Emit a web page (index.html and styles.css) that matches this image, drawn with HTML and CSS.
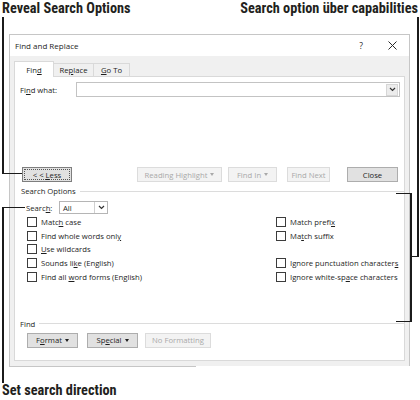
FILE: index.html
```html
<!DOCTYPE html>
<html lang="en">
<head>
<meta charset="utf-8">
<title>Find and Replace</title>
<link rel="stylesheet" href="styles.css">
</head>
<body>
<div class="captions">
  <span class="cap">Reveal Search Options</span>
  <span class="cap">Search option über capabilities</span>
</div>

<div class="dialog">
  <div class="titlebar">
    <span class="title">Find and Replace</span>
    <span class="help">?</span>
    <svg class="close-x" width="9" height="9" viewBox="0 0 9 9"><path d="M0.5 0.5L8.5 8.5M8.5 0.5L0.5 8.5" stroke="#2a2a2a" stroke-width="1" fill="none"/></svg>
  </div>
  <div class="tabstrip">
    <div class="tab active"><span>Fin<u>d</u></span></div>
    <div class="tab w-replace"><span>Re<u>p</u>lace</span></div>
    <div class="tab w-goto"><span><u>G</u>o To</span></div>
  </div>
  <div class="panel">
    <div class="find-row">
      <span class="find-label">Fi<u>n</u>d what:</span>
      <div class="combo">
        <span class="combo-btn"><svg width="7" height="5" viewBox="0 0 7 5"><path d="M1 1L3.5 3.5L6 1" stroke="#333" stroke-width="1.2" fill="none"/></svg></span>
      </div>
    </div>

    <div class="btn-row">
      <button class="btn default b-less"><span class="focus"><span>&lt; &lt; <u>L</u>ess</span></span></button>
      <button class="btn disabled b-rh"><span>Reading Highlight</span><i class="caret"></i></button>
      <button class="btn disabled b-findin"><span>Find In</span><i class="caret"></i></button>
      <button class="btn disabled b-next"><span>Find Next</span></button>
      <button class="btn b-close"><span>Close</span></button>
    </div>

    <div class="group"><span class="group-label">Search Options</span><span class="group-line"></span></div>

    <div class="search-row">
      <span class="search-label">Searc<u>h</u>:</span>
      <div class="select">
        <span class="select-val">All</span>
        <span class="select-btn"><svg width="7" height="5" viewBox="0 0 7 5"><path d="M1 1L3.5 3.5L6 1" stroke="#333" stroke-width="1.2" fill="none"/></svg></span>
      </div>
    </div>

    <div class="checks">
      <label class="check"><span class="cb"></span><span>Matc<u>h</u> case</span></label>
      <label class="check"><span class="cb"></span><span>Match prefi<u>x</u></span></label>
      <label class="check"><span class="cb"></span><span>Find whole words onl<u>y</u></span></label>
      <label class="check"><span class="cb"></span><span>Ma<u>t</u>ch suffix</span></label>
      <label class="check"><span class="cb"></span><span><u>U</u>se wildcards</span></label>
      <span></span>
      <label class="check"><span class="cb"></span><span>Sounds li<u>k</u>e (English)</span></label>
      <label class="check"><span class="cb"></span><span>Ignore punctuation character<u>s</u></span></label>
      <label class="check"><span class="cb"></span><span>Find all <u>w</u>ord forms (English)</span></label>
      <label class="check"><span class="cb"></span><span>Ignore white-sp<u>a</u>ce characters</span></label>
    </div>

    <div class="group find-group"><span class="group-label">Find</span><span class="group-line"></span></div>

    <div class="btn-row bottom-row">
      <button class="btn b-format"><span>F<u>o</u>rmat</span><i class="caret"></i></button>
      <button class="btn b-special"><span>Sp<u>e</u>cial</span><i class="caret"></i></button>
      <button class="btn disabled b-nofmt"><span>No Formatting</span></button>
    </div>
  </div>
</div>
<div class="dialog-base"></div>
<div class="caption-bottom">Set search direction</div>

<div class="line v l1v"></div>
<div class="line h l1h"></div>
<div class="line h l2h"></div>
<div class="line v l2v"></div>
<div class="line v rv"></div>
<div class="line h rconn"></div>
<div class="line v brv"></div>
<div class="line h brt"></div>
<div class="line h brb"></div>
</body>
</html>
```

FILE: styles.css
```css
* { box-sizing: border-box; }
html, body { margin: 0; padding: 0; }
body {
  width: 420px;
  height: 400px;
  position: relative;
  overflow: hidden;
  background: #fff;
  font-family: "Open Sans", "Noto Sans", sans-serif;
  font-size: 7.7px;
  color: #1e1e1e;
}
u { text-decoration: underline; text-underline-offset: 1px; }

/* captions */
.captions {
  display: flex;
  justify-content: space-between;
  height: 17px;
  padding: 0 2px;
}
.cap, .caption-bottom {
  font-family: "Roboto Condensed", "Roboto", sans-serif;
  font-stretch: condensed;
  font-weight: 700;
  font-size: 14.3px;
  line-height: 17px;
  color: #231f20;
  white-space: nowrap;
}
.caption-bottom { margin: 15px 0 0 2px; }

/* dialog */
.dialog {
  margin: 17px 0 0 9px;
  width: 401px;
  border: 1px solid #c6c6c6;
  border-bottom: none;
  background: #f0f0f0;
  padding-bottom: 5px;
}
.dialog-base {
  margin-left: 9px;
  width: 187px;
  height: 1px;
  background: #c6c6c6;
}
.titlebar {
  height: 21px;
  background: #fff;
  display: flex;
  align-items: center;
  padding: 0 12px 0 5px;
}
.title { flex: 1; font-size: 8px; }
.help { font-size: 8.5px; margin-right: 25px; }
.close-x { display: block; }

.tabstrip {
  height: 20px;
  display: flex;
  align-items: flex-end;
  padding-left: 4px;
}
.tab {
  height: 13px;
  border: 1px solid #d9d9d9;
  border-bottom: none;
  background: #f0f0f0;
  display: flex;
  align-items: center;
  justify-content: center;
  margin-left: -1px;
}
.tab.active {
  width: 40px;
  height: 16px;
  margin-left: 0;
  margin-bottom: -1px;
  background: #fff;
  position: relative;
  z-index: 1;
  padding-top: 1px;
}
.w-replace { width: 41px; }
.w-goto { width: 37px; }

.panel {
  margin-left: 4px;
  width: 391px;
  height: 285px;
  background: #fff;
  border: 1px solid #d9d9d9;
  padding: 5px 3px 0 5px;
}

.find-row { display: flex; align-items: center; height: 15px; }
.find-label { width: 56px; }
.combo {
  width: 324px;
  height: 15px;
  border: 1px solid #c3c3c3;
  display: flex;
  justify-content: flex-end;
  align-items: center;
  padding-right: 1px;
}
.combo-btn {
  width: 12px;
  height: 12px;
  background: #ececec;
  border: 1px solid #d6d6d6;
  display: flex;
  align-items: center;
  justify-content: center;
}
.combo-btn svg, .select-btn svg { display: block; }

.btn-row { display: flex; height: 15px; margin-top: 70px; }
.btn {
  height: 15px;
  padding: 0;
  border: 1px solid #adadad;
  background: #e1e1e1;
  font-family: inherit;
  font-size: 7.7px;
  color: #1e1e1e;
  display: flex;
  align-items: center;
  justify-content: center;
  white-space: nowrap;
}
.btn.disabled { background: #f3f3f3; border-color: #dcdcdc; color: #a9a9a9; }
.btn.default { border-color: #7e7e7e; padding: 1px; }
.focus {
  width: 100%;
  height: 100%;
  border: 1px dotted #555;
  display: flex;
  align-items: center;
  justify-content: center;
}
.caret {
  display: inline-block;
  width: 0;
  height: 0;
  margin-left: 3px;
  border-left: 2px solid transparent;
  border-right: 2px solid transparent;
  border-top: 3px solid currentColor;
}
.b-less { width: 50px; margin-left: 2px; }
.b-rh { width: 85px; margin-left: 65px; }
.b-findin { width: 49px; margin-left: 6px; }
.b-next { width: 43px; margin-left: 10px; }
.b-close { width: 51px; margin-left: 17px; }

.group {
  display: flex;
  align-items: center;
  height: 12px;
  margin-top: 3px;
  margin-right: -3px;
}
.group-label { margin-left: 1px; padding-right: 4px; }
.group-line { flex: 1; height: 1px; background: #dcdcdc; }
.find-group { margin-top: 34px; }
.find-group .group-label { margin-left: 0; }

.search-row { display: flex; align-items: center; height: 13px; margin-top: 4px; padding-left: 6px; }
.search-label { width: 33px; }
.select {
  width: 49px;
  height: 13px;
  border: 1px solid #b5b5b5;
  display: flex;
  align-items: center;
  padding-left: 3px;
}
.select-val { flex: 1; }
.select-btn {
  width: 13px;
  height: 11px;
  border-left: 1px solid #d0d0d0;
  display: flex;
  align-items: center;
  justify-content: center;
}

.checks {
  display: grid;
  grid-template-columns: 249px 1fr;
  grid-auto-rows: 13.75px;
  margin-top: 1px;
  padding-left: 7px;
}
.check { display: flex; align-items: center; white-space: nowrap; }
.cb {
  width: 10px;
  height: 10px;
  border: 1px solid #3c3c3c;
  background: #fff;
  margin-right: 4px;
  flex: none;
}

.bottom-row { margin-top: 3px; }
.b-format { width: 51px; margin-left: 7px; }
.b-special { width: 51px; margin-left: 9px; }
.b-nofmt { width: 66px; margin-left: 7px; }

/* callout lines (overlay) */
.line { position: absolute; background: #1b1b1b; }
.line.v { width: 2px; }
.line.h { height: 1px; }
.l1v { left: 2px; top: 17px; height: 157px; }
.l1h { left: 2px; top: 173px; width: 20px; }
.l2h { left: 2px; top: 207px; width: 23px; }
.l2v { left: 2px; top: 207px; height: 176px; }
.rv { left: 417px; top: 17px; height: 240px; }
.rconn { left: 410px; top: 256px; width: 8px; }
.brv { left: 410px; top: 193px; height: 129px; }
.brt { left: 396px; top: 193px; width: 15px; }
.brb { left: 396px; top: 321px; width: 15px; }
```
